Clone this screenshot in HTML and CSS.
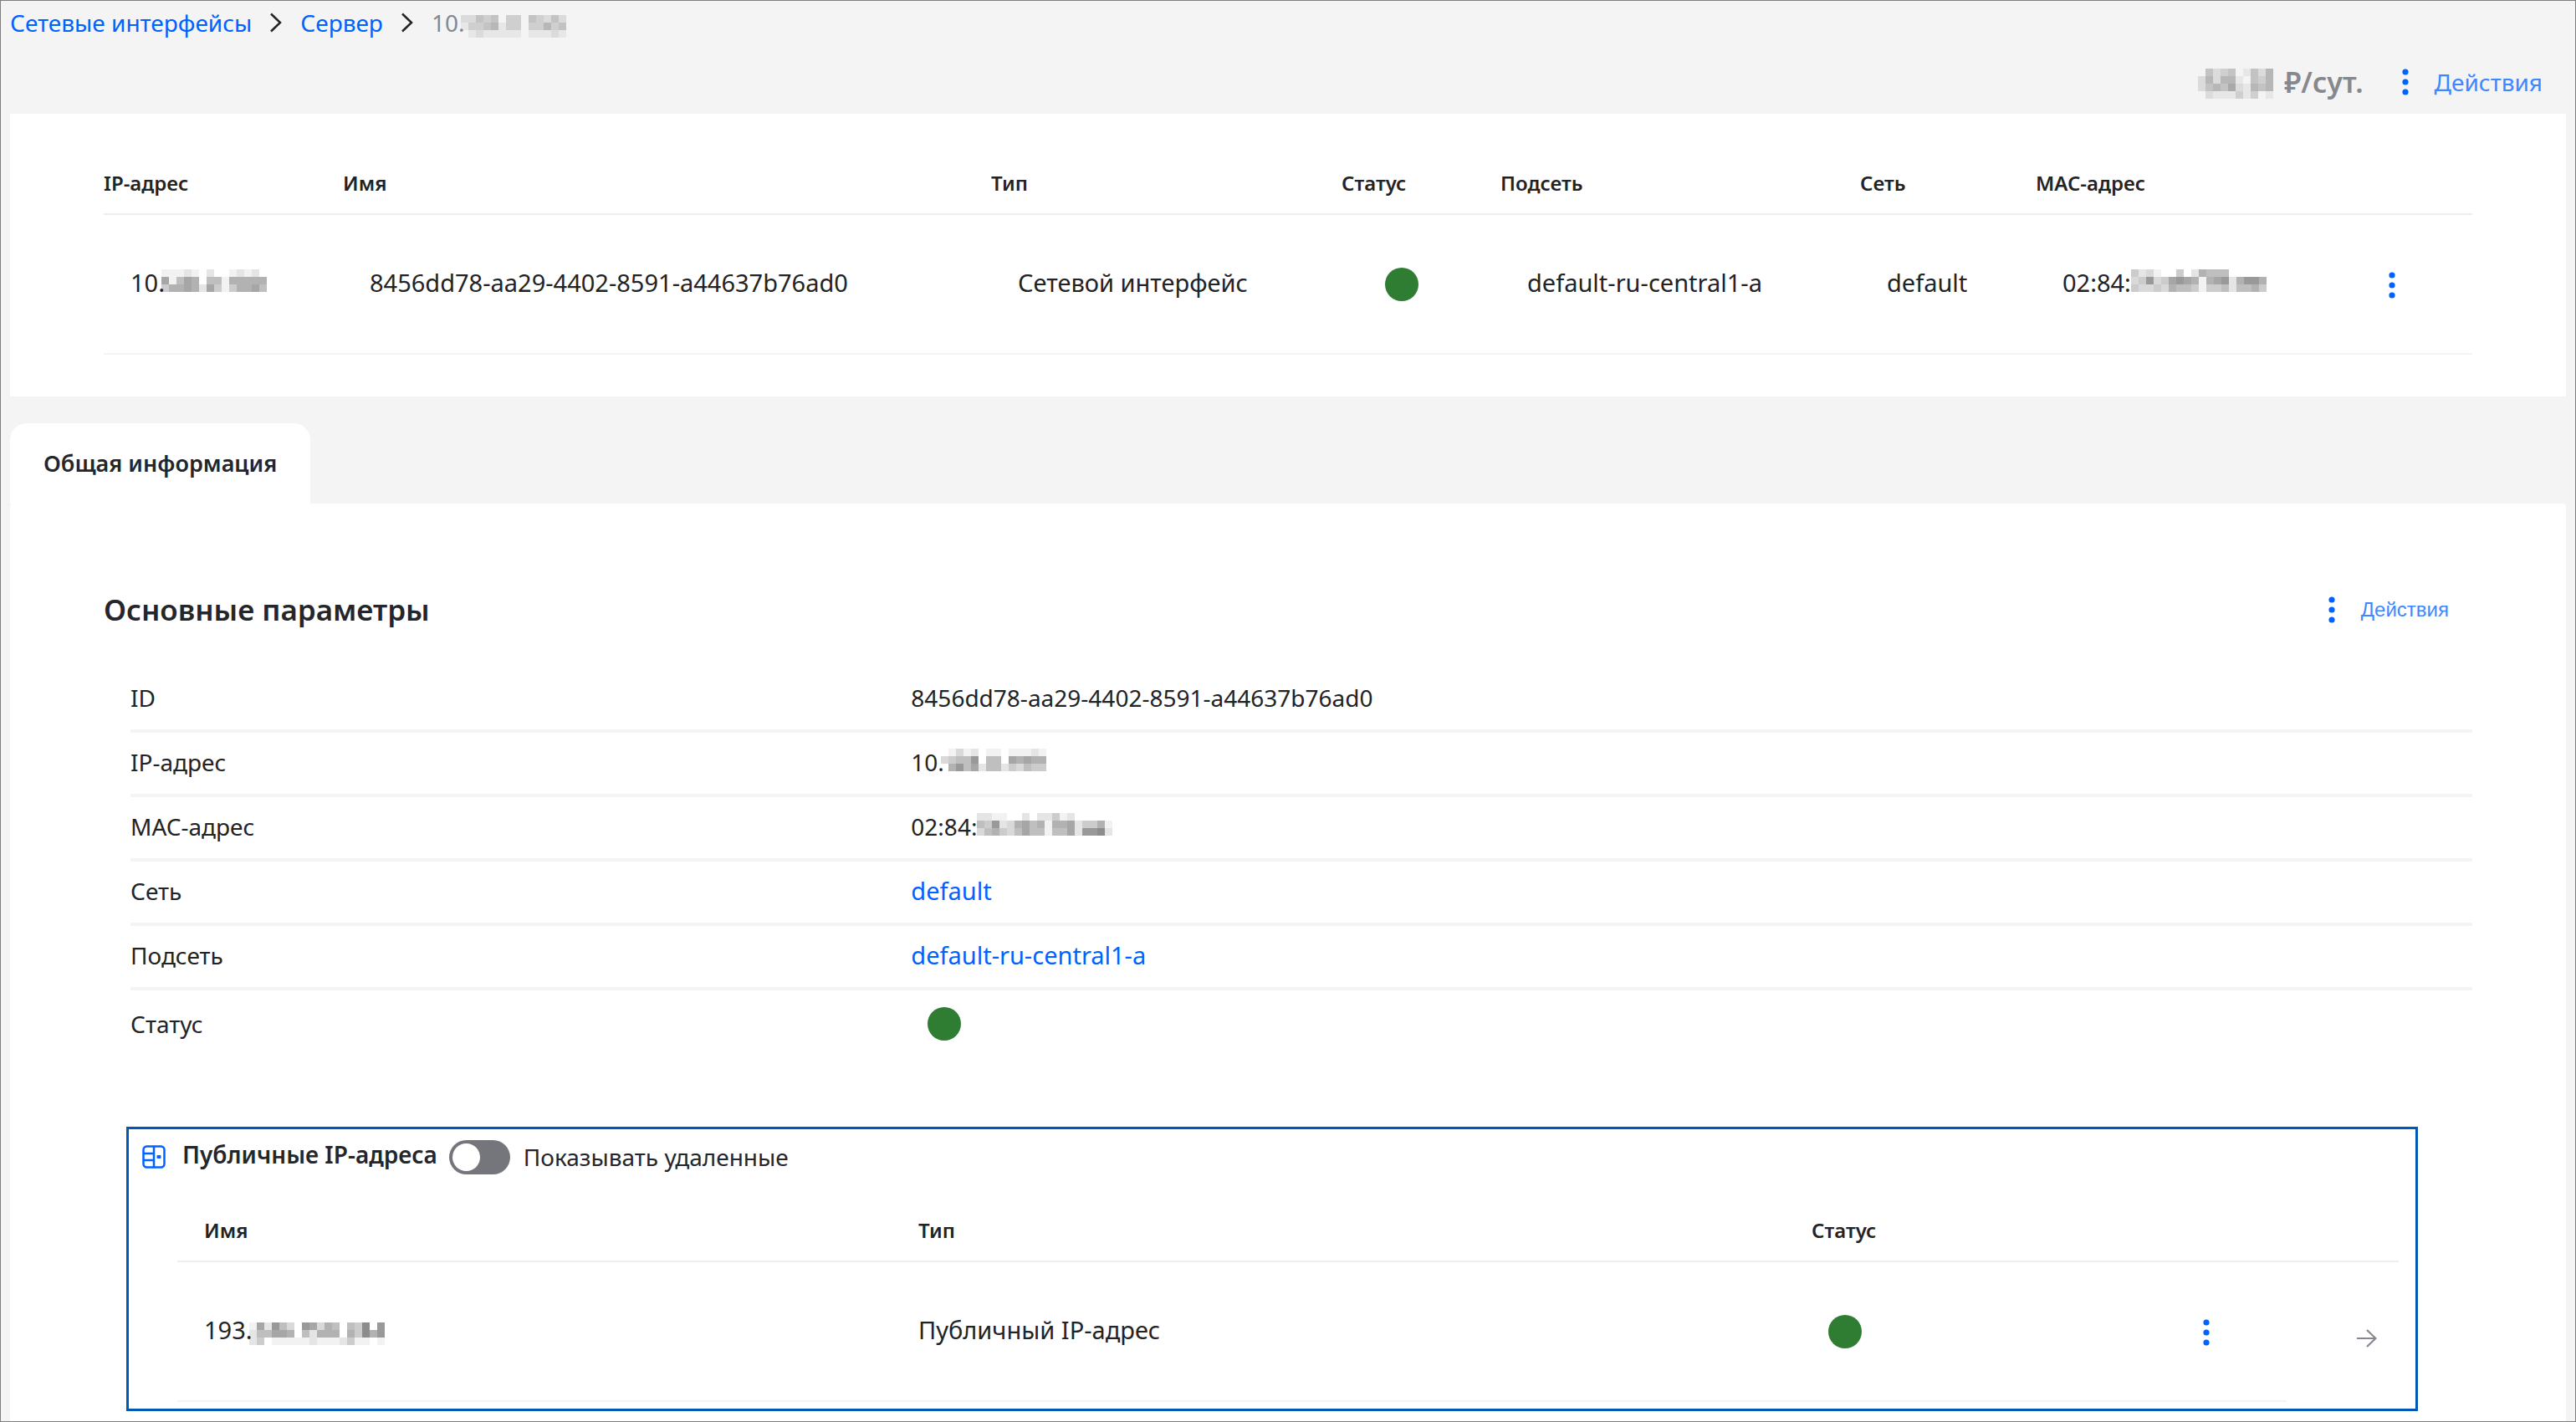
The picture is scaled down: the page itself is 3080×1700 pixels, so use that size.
FILE: index.html
```html
<!DOCTYPE html>
<html lang="ru">
<head>
<meta charset="utf-8">
<meta name="viewport" content="width=device-width, initial-scale=1">
<title>Сетевой интерфейс</title>
<link rel="stylesheet" href="styles.css">
<script src="mosaic.js" defer></script>
</head>
<body class="page">
  <svg class="sprite" aria-hidden="true">
    <symbol id="dots" viewBox="0 0 8 32"><circle cx="4" cy="4" r="3.6"/><circle cx="4" cy="16" r="3.6"/><circle cx="4" cy="28" r="3.6"/></symbol>
    <symbol id="chevron" viewBox="0 0 16 24"><path d="M2 1.500 13 12 2 22.500" fill="none" stroke="currentColor" stroke-width="2.500"/></symbol>
  </svg>

  <nav class="crumbs" aria-label="Навигация">
    <a class="link" href="#">Сетевые интерфейсы</a>
    <svg class="crumbs__sep"><use href="#chevron"/></svg>
    <a class="link" href="#">Сервер</a>
    <svg class="crumbs__sep"><use href="#chevron"/></svg>
    <span class="crumbs__current">10.<svg class="mosaic mosaic--low mosaic--tight" data-rows="22434033043242 13345133033534 01211111011121"></svg></span>
  </nav>

  <header class="toolbar">
    <span class="price"><svg class="price__value mosaic mosaic--low" data-rows="04234014250 25255104350 24546215450 02111313010"></svg>₽/сут.</span>
    <button class="actions" type="button"><svg class="dots"><use href="#dots"/></svg>Действия</button>
  </header>

  <main class="content">
    <section class="panel panel--summary">
      <table class="table summary">
        <colgroup>
          <col class="summary__ip"><col><col class="summary__type"><col class="summary__status"><col class="summary__subnet"><col class="summary__net"><col class="summary__mac"><col class="summary__menu">
        </colgroup>
        <thead>
          <tr><th>IP-адрес</th><th>Имя</th><th>Тип</th><th>Статус</th><th>Подсеть</th><th>Сеть</th><th>MAC-адрес</th><th></th></tr>
        </thead>
        <tbody>
          <tr>
            <td>10.<svg class="mosaic mosaic--tight" data-rows="11121020012120 71576055166666 46676274146675"></svg></td>
            <td>8456dd78-aa29-4402-8591-a44637b76ad0</td>
            <td>Сетевой интерфейс</td>
            <td><span class="status" role="img" aria-label="Активен"></span></td>
            <td>default-ru-central1-a</td>
            <td>default</td>
            <td>02:84:<svg class="mosaic" data-rows="423100402655500000 348347876167826886 433436554144525564"></svg></td>
            <td><button class="actions" type="button" aria-label="Действия"><svg class="dots"><use href="#dots"/></svg></button></td>
          </tr>
        </tbody>
      </table>
    </section>

    <div class="tabs" role="tablist">
      <button class="tab" type="button" role="tab" aria-selected="true">Общая информация</button>
    </div>

    <section class="panel panel--details">
      <div class="section-head">
        <h2 class="section-head__title">Основные параметры</h2>
        <button class="actions actions--small" type="button"><svg class="dots"><use href="#dots"/></svg>Действия</button>
      </div>

      <dl class="params">
        <div class="params__row"><dt>ID</dt><dd>8456dd78-aa29-4402-8591-a44637b76ad0</dd></div>
        <div class="params__row"><dt>IP-адрес</dt><dd>10.<svg class="mosaic mosaic--tight" data-rows="01312011011121 34558055076766 06857255243544"></svg></dd></div>
        <div class="params__row"><dt>MAC-адрес</dt><dd>02:84:<svg class="mosaic" data-rows="221100202241200000 548236756166724461 356435755155728892"></svg></dd></div>
        <div class="params__row"><dt>Сеть</dt><dd><a class="link params__link" href="#">default</a></dd></div>
        <div class="params__row"><dt>Подсеть</dt><dd><a class="link params__link" href="#">default-ru-central1-a</a></dd></div>
        <div class="params__row"><dt>Статус</dt><dd><span class="status" role="img" aria-label="Активен"></span></dd></div>
      </dl>

      <section class="box">
        <div class="box__head">
          <svg class="box__icon" viewBox="0 0 32 32" fill="none" stroke="currentColor" stroke-width="2.500"><rect x="3.500" y="3.500" width="25" height="25" rx="4"/><path d="M16 3.500v25M3.500 12H16M3.500 20H16"/><rect x="19.500" y="14" width="5" height="4" rx="1" fill="currentColor" stroke="none"/></svg>
          <h3 class="box__title">Публичные IP-адреса</h3>
          <label class="switch"><input class="switch__input" type="checkbox" role="switch">Показывать удаленные</label>
        </div>
        <table class="table addresses">
          <colgroup>
            <col><col class="addresses__type"><col class="addresses__status"><col class="addresses__menu"><col class="addresses__open">
          </colgroup>
          <thead>
            <tr><th>Имя</th><th>Тип</th><th>Статус</th><th></th><th></th></tr>
          </thead>
          <tbody>
            <tr>
              <td>193.<svg class="mosaic mosaic--low mosaic--tight" data-rows="1728530873650549080 2557760526660649680 2401111121112411010"></svg></td>
              <td>Публичный IP-адрес</td>
              <td><span class="status" role="img" aria-label="Активен"></span></td>
              <td><button class="actions" type="button" aria-label="Действия"><svg class="dots"><use href="#dots"/></svg></button></td>
              <td class="addresses__arrow"><a class="arrow" href="#" aria-label="Открыть"><svg class="arrow__icon" viewBox="0 0 24 24" fill="none" stroke="currentColor" stroke-width="2.200"><path d="M0 12h22M12 2l10.500 10L12 22"/></svg></a></td>
            </tr>
          </tbody>
        </table>
      </section>
    </section>
  </main>
</body>
</html>
```
FILE: styles.css
```css
*,
*::before,
*::after {
  box-sizing: border-box;
}

.page {
  display: flex;
  flex-direction: column;
  min-height: 100vh;
  margin: 0;
  padding: 0 11px;
  border: 1px solid #7f7f7f;
  background: #f4f4f4;
  color: #222325;
  font-family: "Noto Sans", "Open Sans", sans-serif;
  font-size: 28px;
  line-height: 40px;
}

.sprite {
  position: absolute;
  width: 0;
  height: 0;
}

.link {
  color: #0062ff;
  text-decoration: none;
}

.mosaic {
  vertical-align: baseline;
}

.mosaic--low {
  vertical-align: -7px;
}

.mosaic--tight {
  margin-left: -4px;
}

.crumbs {
  display: flex;
  align-items: center;
  gap: 21px;
  padding-top: 6px;
}

.crumbs__sep {
  width: 16px;
  height: 24px;
}

.crumbs__current {
  color: #85888e;
}

.toolbar {
  display: flex;
  justify-content: flex-end;
  align-items: center;
  gap: 46px;
  padding: 31px 28px 18px;
}

.price {
  color: #85888c;
  font-size: 34px;
  font-weight: 600;
}

.price__value {
  margin-right: 4px;
}

.actions {
  display: inline-flex;
  align-items: center;
  gap: 31px;
  padding: 0;
  border: 0;
  background: none;
  color: #3d87ff;
  font: inherit;
  cursor: pointer;
}

.actions--small {
  font-family: "Liberation Sans", Arial, sans-serif;
  font-size: 24px;
}

.dots {
  width: 8px;
  height: 32px;
  fill: #0062ff;
}

.content {
  display: flex;
  flex: 1;
  flex-direction: column;
}

.panel {
  background: #fff;
}

.panel--summary {
  padding: 48px 112px 50px;
}

.panel--details {
  flex: 1;
  padding: 103px 112px 11px;
  border-radius: 4px 4px 0 0;
}

.table {
  width: 100%;
  border-collapse: separate;
  border-spacing: 0;
  table-layout: fixed;
  text-align: left;
}

.table th {
  padding: 19px 0 20px;
  border-bottom: 2px solid #eeeeef;
  font-size: 24px;
  font-weight: 600;
  line-height: 32px;
}

.table td {
  height: 167px;
  padding: 0 0 3px 32px;
  border-bottom: 2px solid #f4f4f4;
  font-size: 29px;
  white-space: nowrap;
}

.table .actions,
.status {
  vertical-align: middle;
}

.summary__ip { width: 286px; }
.summary__type { width: 419px; }
.summary__status { width: 190px; }
.summary__subnet { width: 430px; }
.summary__net { width: 210px; }
.summary__mac { width: 390px; }
.summary__menu { width: 132px; }

.status {
  display: inline-block;
  width: 40px;
  height: 40px;
  margin-left: 20px;
  border-radius: 50%;
  background: #2f7d32;
}

.tabs {
  display: flex;
  margin-top: 32px;
}

.tab {
  padding: 28px 40px;
  border: 0;
  border-radius: 20px 20px 0 0;
  background: #fff;
  color: #24262b;
  font: inherit;
  font-size: 27px;
  font-weight: 600;
}

.section-head {
  display: flex;
  justify-content: space-between;
  align-items: center;
  padding-right: 28px;
}

.section-head__title {
  margin: 0;
  color: #24262b;
  font-size: 35px;
  font-weight: 600;
  line-height: 48px;
}

.params {
  margin: 46px 0 83px 32px;
}

.params__row {
  display: grid;
  grid-template-columns: 1fr 2fr;
  align-items: center;
  height: 77px;
  padding-bottom: 4px;
  border-bottom: 4px solid #f4f4f4;
}

.params__row:last-child {
  height: 80px;
  padding-bottom: 1px;
  border-bottom: 0;
}

.params dd {
  display: flow-root;
  margin: 0;
}

.params__link {
  font-size: 29px;
}

.params .status {
  display: block;
}

.box {
  margin: 0 65px 0 27px;
  padding-bottom: 8px;
  border: 3px solid #0059b3;
}

.box__head {
  display: flex;
  align-items: center;
  gap: 18px;
  min-height: 66px;
  margin-bottom: 20px;
  padding-left: 14px;
}

.box__icon {
  width: 32px;
  height: 32px;
  color: #0062ff;
}

.box__title {
  margin: 0;
  padding-bottom: 6px;
  color: #24262b;
  font-size: 28px;
  font-weight: 600;
}

.switch {
  display: flex;
  align-items: center;
  gap: 16px;
  margin-left: -4px;
  color: #24262b;
}

.switch__input {
  display: flex;
  align-items: center;
  width: 73px;
  height: 41px;
  margin: 0;
  padding: 4px;
  border-radius: 21px;
  background: #75767c;
  appearance: none;
}

.switch__input::before {
  width: 33px;
  height: 33px;
  border-radius: 50%;
  background: #fff;
  content: "";
}

.switch__input:checked {
  justify-content: flex-end;
  background: #0062ff;
}

.addresses {
  width: auto;
  min-width: calc(100% - 78px);
  margin: 0 20px 0 58px;
}

.addresses th {
  padding-left: 32px;
}

.addresses__type { width: 1068px; }
.addresses__status { width: 468px; }
.addresses__menu { width: 132px; }
.addresses__open { width: 134px; }

.addresses .addresses__arrow {
  padding: 8px 26px 0 0;
  border-bottom: 0;
  text-align: right;
}

.arrow {
  display: inline-block;
  color: #85888e;
  vertical-align: middle;
}

.arrow__icon {
  display: block;
  width: 24px;
  height: 24px;
}
```
FILE: mosaic.js
```js
// Fills each masked value with a grid of grey cells.
// data-rows holds one group of digits per row; a digit is the darkness of a cell.
const CELL = 9;
const STEP = 0.05;

document.querySelectorAll('.mosaic').forEach((svg) => {
  const rows = svg.dataset.rows.split(' ');
  svg.setAttribute('width', rows[0].length * CELL);
  svg.setAttribute('height', rows.length * CELL);
  svg.setAttribute('aria-hidden', 'true');
  svg.innerHTML = rows.map((row, y) => [...row].map((level, x) =>
    `<rect x="${x * CELL}" y="${y * CELL}" width="${CELL}" height="${CELL}" fill-opacity="${level * STEP}"/>`
  ).join('')).join('');
});
```
